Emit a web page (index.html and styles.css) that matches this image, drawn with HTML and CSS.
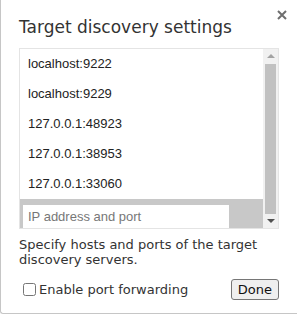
FILE: index.html
```html
<!DOCTYPE html>
<html lang="en">
<head>
    <meta charset="UTF-8">
    <title>Target discovery settings</title>
    <link rel="stylesheet" href="styles.css">
</head>
<body>
    <div class="dialog">
        <button class="close" title="Close">
            <svg width="10" height="10" viewBox="0 0 10 10"><path d="M1 1L9 9M9 1L1 9" stroke="#6e6e6e" stroke-width="2"/></svg>
        </button>
        <h1 class="title">Target discovery settings</h1>

        <div class="list-box">
            <div class="list">
                <div class="item">localhost:9222</div>
                <div class="item">localhost:9229</div>
                <div class="item">127.0.0.1:48923</div>
                <div class="item">127.0.0.1:38953</div>
                <div class="item">127.0.0.1:33060</div>
                <div class="item item-edit">
                    <input type="text" placeholder="IP address and port">
                </div>
            </div>
            <div class="scrollbar">
                <div class="arrow arrow-up"></div>
                <div class="thumb"></div>
                <div class="arrow arrow-down"></div>
            </div>
        </div>

        <p class="hint">Specify hosts and ports of the target discovery servers.</p>

        <div class="footer">
            <label class="check"><input type="checkbox"> Enable port forwarding</label>
            <button class="btn">Done</button>
        </div>
    </div>
</body>
</html>
```

FILE: styles.css
```css
* {
    box-sizing: border-box;
    margin: 0;
    padding: 0;
}

body {
    background-color: white;
    font-family: 'DejaVu Sans', sans-serif;
    color: #333;
}

.dialog {
    position: relative;
    width: 297px;
    height: 314px;
    border-left: 1px solid #c6c6c6;
    border-bottom: 1px solid #c6c6c6;
    border-bottom-left-radius: 3px;
    padding: 16px 18px 0 18px;
}

.close {
    position: absolute;
    top: 10px;
    right: 10px;
    border: none;
    background: none;
    width: 10px;
    height: 10px;
    display: flex;
}

.title {
    font-size: 17px;
    font-weight: normal;
    line-height: 22px;
    color: #333;
    margin-bottom: 10px;
}

.list-box {
    display: flex;
    height: 181px;
    border: 1px solid #e4e4e4;
    font-family: 'Liberation Sans', Arial, sans-serif;
    font-size: 13px;
    color: #222;
}

.list {
    flex: 1;
    display: flex;
    flex-direction: column;
}

.item {
    height: 30px;
    line-height: 30px;
    padding-left: 8px;
}

.item-edit {
    height: 29px;
    background-color: #c8c8c8;
    padding: 3px 34px 3px 3px;
}

.item-edit input {
    width: 100%;
    height: 23px;
    border: none;
    outline: none;
    padding-left: 5px;
    font-family: 'Liberation Sans', Arial, sans-serif;
    font-size: 13px;
    color: #222;
}

.item-edit input::placeholder {
    color: #777;
}

.scrollbar {
    width: 15px;
    background-color: #f1f1f1;
    display: flex;
    flex-direction: column;
    align-items: center;
}

.arrow {
    width: 0;
    height: 0;
    border-left: 4px solid transparent;
    border-right: 4px solid transparent;
}

.arrow-up {
    margin: 5px 0 5px;
    border-bottom: 4px solid #a3a3a3;
}

.arrow-down {
    margin: 5px 0 5px;
    border-top: 4px solid #505050;
}

.thumb {
    flex: 1;
    width: 11px;
    background-color: #c1c1c1;
    margin-top: 1px;
}

.hint {
    margin-top: 8px;
    font-size: 13px;
    line-height: 15px;
    color: #333;
}

.footer {
    display: flex;
    justify-content: space-between;
    align-items: center;
    margin-top: 12px;
    padding-left: 4px;
}

.check {
    display: flex;
    align-items: center;
    font-size: 13px;
    color: #333;
}

.check input {
    width: 13px;
    height: 13px;
    margin-right: 3px;
}

.btn {
    font-family: 'DejaVu Sans', sans-serif;
    font-size: 13px;
    color: #111;
    background-color: #efefef;
    border: 1px solid #767676;
    border-radius: 3px;
    padding: 1px 6px;
    height: 21px;
}
```
